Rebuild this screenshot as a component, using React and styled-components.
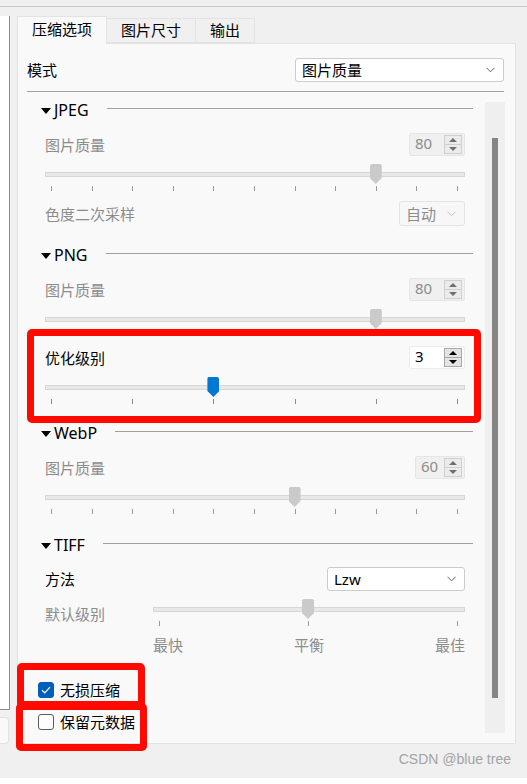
import styled, { createGlobalStyle } from "styled-components";

const font = `"Noto Sans", "Noto Sans CJK SC", sans-serif`;

const GlobalStyle = createGlobalStyle`
  * { box-sizing: border-box; }
  body {
    margin: 0;
    background: #ffffff;
    font-family: ${font};
  }
`;

const Slider = ({ frac, ticks, disabled, active }) => (
  <SliderBox>
    <Groove />
    <TickRow>
      {Array.from({ length: ticks }).map((_, i) => (
        <Tick key={i} $disabled={disabled} />
      ))}
    </TickRow>
    <Handle $active={active} style={{ left: `calc(${frac} * (100% - 14px))` }} />
  </SliderBox>
);

const SpinBox = ({ value, disabled, width }) => (
  <Spin $disabled={disabled} $w={width}>
    <SpinText $disabled={disabled}>{value}</SpinText>
    <SpinButtons>
      <SpinBtn $disabled={disabled}>
        <Arrow $up $disabled={disabled} />
      </SpinBtn>
      <SpinBtn $disabled={disabled}>
        <Arrow $disabled={disabled} />
      </SpinBtn>
    </SpinButtons>
  </Spin>
);

const Chevron = ({ color }) => (
  <svg width="9" height="6" viewBox="0 0 9 6">
    <path d="M0.5 0.8 L4.5 4.8 L8.5 0.8" fill="none" stroke={color} strokeWidth="1" />
  </svg>
);

const Combo = ({ text, width, disabled }) => (
  <ComboBox $w={width} $disabled={disabled}>
    <span>{text}</span>
    <Chevron color={disabled ? "#c4c4c4" : "#606060"} />
  </ComboBox>
);

const Group = ({ title, mt }) => (
  <GroupHeader $mt={mt}>
    <Triangle />
    <GroupTitle>{title}</GroupTitle>
    <GroupLine />
  </GroupHeader>
);

const App = () => {
  return (
    <Page>
      <GlobalStyle />
      <TopBar />
      <Main>
        <LeftColumn>
          <LeftPanel />
          <LeftStub />
        </LeftColumn>
        <TabWidget>
          <TabBar>
            <Tab $selected>压缩选项</Tab>
            <Tab>图片尺寸</Tab>
            <Tab>输出</Tab>
          </TabBar>
          <Pane>
            <ModeRow>
              <Label>模式</Label>
              <Combo text="图片质量" width={209} />
            </ModeRow>
            <Separator />
            <ScrollArea>
              <Content>
                <Group title="JPEG" mt={0} />
                <FieldRow $mt={15}>
                  <Label $disabled>图片质量</Label>
                  <SpinBox value="80" disabled width={56} />
                </FieldRow>
                <SliderWrap $mt={6}>
                  <Slider frac={0.8} ticks={11} disabled />
                </SliderWrap>
                <FieldRow $mt={9}>
                  <Label $disabled>色度二次采样</Label>
                  <Combo text="自动" width={66} disabled />
                </FieldRow>

                <Group title="PNG" mt={21} />
                <FieldRow $mt={15}>
                  <Label $disabled>图片质量</Label>
                  <SpinBox value="80" disabled width={56} />
                </FieldRow>
                <SliderWrap $mt={6}>
                  <Slider frac={0.8} ticks={11} disabled />
                </SliderWrap>
                <FieldRow $mt={9}>
                  <Label>优化级别</Label>
                  <SpinBox value="3" width={56} />
                </FieldRow>
                <SliderWrap $mt={6}>
                  <Slider frac={0.4} ticks={6} active />
                </SliderWrap>

                <Group title="WebP" mt={20} />
                <FieldRow $mt={15}>
                  <Label $disabled>图片质量</Label>
                  <SpinBox value="60" disabled width={50} />
                </FieldRow>
                <SliderWrap $mt={6}>
                  <Slider frac={0.6} ticks={11} disabled />
                </SliderWrap>

                <Group title="TIFF" mt={22} />
                <FieldRow $mt={14}>
                  <Label>方法</Label>
                  <Combo text="Lzw" width={138} />
                </FieldRow>
                <LevelRow $mt={6}>
                  <LevelLabel $disabled>默认级别</LevelLabel>
                  <LevelSlider>
                    <Slider frac={0.5} ticks={3} disabled />
                  </LevelSlider>
                </LevelRow>
                <ScaleLabels>
                  <ScaleText>最快</ScaleText>
                  <ScaleText>平衡</ScaleText>
                  <ScaleText>最佳</ScaleText>
                </ScaleLabels>

                <CheckRow $mt={26}>
                  <CheckBox $checked>
                    <svg width="10" height="8" viewBox="0 0 10 8">
                      <path d="M1 4.2 L3.8 6.8 L9 1.2" fill="none" stroke="#fff" strokeWidth="1.2" />
                    </svg>
                  </CheckBox>
                  <CheckLabel>无损压缩</CheckLabel>
                </CheckRow>
                <CheckRow $mt={11}>
                  <CheckBox />
                  <CheckLabel>保留元数据</CheckLabel>
                </CheckRow>
              </Content>
              <ScrollTrack>
                <ScrollThumb />
              </ScrollTrack>
            </ScrollArea>
          </Pane>
        </TabWidget>
      </Main>
      <Footer>
        <Watermark>CSDN @blue tree</Watermark>
      </Footer>
      <BottomStrip />

      <Highlight $x={27} $y={329} $w={454} $h={94} />
      <Highlight $x={17} $y={663} $w={128} $h={45} />
      <Highlight $x={16} $y={703} $w={131} $h={48} />
    </Page>
  );
};

export default App;

const Page = styled.div`
  position: relative;
  width: 100%;
  height: 784px;
  background: #f0f0f0;
  display: flex;
  flex-direction: column;
  overflow: hidden;
`;

const TopBar = styled.div`
  height: 7px;
  border-bottom: 1px solid #c9c9c9;
`;

const Main = styled.div`
  display: flex;
  margin-top: 9px;
`;

const LeftColumn = styled.div`
  width: 10px;
  display: flex;
  flex-direction: column;
`;

const LeftPanel = styled.div`
  height: 694px;
  background: #ffffff;
  border-right: 1px solid #8e8e8e;
  border-bottom: 1px solid #8e8e8e;
`;

const LeftStub = styled.div`
  margin-top: 7px;
  width: 9px;
  height: 27px;
  background: #f9f9f9;
  border: 1px solid #e2e2e2;
  border-left: none;
  border-radius: 0 4px 4px 0;
`;

const TabWidget = styled.div`
  margin-left: 7px;
  width: 499px;
  display: flex;
  flex-direction: column;
`;

const TabBar = styled.div`
  display: flex;
  align-items: flex-end;
  height: 27px;
`;

const Tab = styled.div`
  position: relative;
  z-index: ${(p) => (p.$selected ? 2 : 1)};
  height: ${(p) => (p.$selected ? 28 : 25)}px;
  margin-bottom: ${(p) => (p.$selected ? -1 : 0)}px;
  padding: 0 14px;
  display: flex;
  align-items: center;
  justify-content: center;
  font-size: 15px;
  line-height: 18px;
  color: #000;
  background: ${(p) => (p.$selected ? "#f9f9f9" : "#f0f0f0")};
  border: 1px solid #e3e3e3;
  border-bottom: ${(p) => (p.$selected ? "none" : "1px solid #e3e3e3")};
  border-left: ${(p) => (p.$selected ? "1px solid #e3e3e3" : "none")};
  padding-bottom: ${(p) => (p.$selected ? 3 : 1)}px;
`;

const Pane = styled.div`
  height: 701px;
  background: #f9f9f9;
  border: 1px solid #e3e3e3;
  padding: 14px 10px 0 9px;
  display: flex;
  flex-direction: column;
`;

const ModeRow = styled.div`
  display: flex;
  align-items: center;
  justify-content: space-between;
  height: 24px;
  padding-right: 1px;
`;

const Label = styled.span`
  font-size: 15px;
  line-height: 18px;
  color: ${(p) => (p.$disabled ? "#8c8c8c" : "#000000")};
`;

const ComboBox = styled.div`
  width: ${(p) => p.$w}px;
  height: ${(p) => (p.$disabled ? 25 : 24)}px;
  display: flex;
  align-items: center;
  justify-content: space-between;
  padding: 0 8px 0 6px;
  font-size: 15px;
  line-height: 18px;
  color: ${(p) => (p.$disabled ? "#8c8c8c" : "#000")};
  background: ${(p) => (p.$disabled ? "#f7f7f7" : "#ffffff")};
  border: 1px solid ${(p) => (p.$disabled ? "#e4e4e4" : "#cccccc")};
  border-radius: 3px;
`;

const Separator = styled.div`
  margin-top: 9px;
  height: 1px;
  background: #a0a0a0;
  margin-right: 1px;
`;

const ScrollArea = styled.div`
  margin-top: 10px;
  height: 631px;
  display: flex;
`;

const Content = styled.div`
  flex: 1;
  display: flex;
  flex-direction: column;
`;

const ScrollTrack = styled.div`
  width: 20px;
  background: #efefef;
  display: flex;
  justify-content: center;
  padding: 36px 0 35px;
`;

const ScrollThumb = styled.div`
  width: 6px;
  background: #858585;
`;

const GroupHeader = styled.div`
  margin-top: ${(p) => p.$mt}px;
  height: 16px;
  display: flex;
  align-items: center;
  padding: 0 12px 0 14px;
`;

const Triangle = styled.div`
  width: 0;
  height: 0;
  border-left: 5px solid transparent;
  border-right: 5px solid transparent;
  border-top: 6px solid #000;
  margin-top: 1px;
`;

const GroupTitle = styled.span`
  margin-left: 3px;
  font-size: 16px;
  line-height: 16px;
  color: #000;
`;

const GroupLine = styled.div`
  flex: 1;
  height: 1px;
  margin-left: 18px;
  margin-top: -3px;
  background: #a0a0a0;
`;

const FieldRow = styled.div`
  margin-top: ${(p) => p.$mt}px;
  display: flex;
  align-items: center;
  justify-content: space-between;
  padding: 0 20px 0 18px;
`;

const Spin = styled.div`
  width: ${(p) => p.$w}px;
  height: 23px;
  display: flex;
  align-items: center;
  background: ${(p) => (p.$disabled ? "#f0f0f0" : "#ffffff")};
  border: 1px solid ${(p) => (p.$disabled ? "#e6e6e6" : "#ececec")};
  border-radius: 2px;
`;

const SpinText = styled.span`
  flex: 1;
  padding: 0 0 3px 5px;
  font-size: 15px;
  line-height: 18px;
  color: ${(p) => (p.$disabled ? "#8c8c8c" : "#000")};
`;

const SpinButtons = styled.div`
  width: 18px;
  height: 19px;
  margin-right: 2px;
  display: flex;
  flex-direction: column;
`;

const SpinBtn = styled.div`
  flex: 1;
  display: flex;
  align-items: center;
  justify-content: center;
  background: ${(p) => (p.$disabled ? "#ebebeb" : "#e4e4e4")};
  border: 1px solid ${(p) => (p.$disabled ? "#cfcfcf" : "#a8a8a8")};
  & + & {
    border-top: none;
  }
`;

const Arrow = styled.div`
  width: 0;
  height: 0;
  border-left: 4px solid transparent;
  border-right: 4px solid transparent;
  ${(p) =>
    p.$up
      ? `border-bottom: 4px solid ${p.$disabled ? "#707070" : "#000"};`
      : `border-top: 4px solid ${p.$disabled ? "#707070" : "#000"};`}
`;

const SliderWrap = styled.div`
  margin-top: ${(p) => p.$mt}px;
  padding: 0 20px 0 18px;
`;

const SliderBox = styled.div`
  position: relative;
  height: 30px;
`;

const Groove = styled.div`
  position: absolute;
  top: 10px;
  left: 0;
  right: 0;
  height: 5px;
  background: #e8e8e8;
  border: 1px solid #d6d6d6;
`;

const TickRow = styled.div`
  position: absolute;
  top: 24px;
  left: 6px;
  right: 7px;
  display: flex;
  justify-content: space-between;
`;

const Tick = styled.div`
  width: 1px;
  height: 5px;
  background: ${(p) => (p.$disabled ? "#9a9a96" : "#8a8a8a")};
`;

const Handle = styled.div`
  position: absolute;
  top: 2px;
  width: 12px;
  height: 20px;
  background: ${(p) => (p.$active ? "#0078d4" : "#cacaca")};
  border-radius: 2px 2px 0 0;
  clip-path: polygon(0 0, 100% 0, 100% 70%, 50% 100%, 0 70%);
`;

const LevelRow = styled.div`
  margin-top: ${(p) => p.$mt}px;
  display: flex;
  align-items: center;
  padding: 0 20px 0 18px;
`;

const LevelLabel = styled(Label)`
  width: 108px;
  margin-top: 4px;
`;

const LevelSlider = styled.div`
  flex: 1;
`;

const ScaleLabels = styled.div`
  margin-top: 10px;
  height: 16px;
  display: flex;
  justify-content: space-between;
  padding: 0 20px 0 126px;
`;

const ScaleText = styled.span`
  font-size: 15px;
  line-height: 16px;
  color: #8c8c8c;
`;

const CheckRow = styled.div`
  margin-top: ${(p) => p.$mt}px;
  height: 22px;
  display: flex;
  align-items: center;
  padding-left: 11px;
`;

const CheckBox = styled.div`
  width: 16px;
  height: 16px;
  border-radius: 3px;
  display: flex;
  align-items: center;
  justify-content: center;
  background: ${(p) => (p.$checked ? "#005fb8" : "#fdfdfd")};
  border: 1px solid ${(p) => (p.$checked ? "#005fb8" : "#5c5c5c")};
`;

const CheckLabel = styled.span`
  margin-left: 6px;
  font-size: 15px;
  line-height: 18px;
  color: #000;
`;

const Footer = styled.div`
  height: 34px;
  display: flex;
  align-items: center;
  justify-content: flex-end;
  padding: 0 16px 4px 0;
`;

const Watermark = styled.span`
  font-family: "Liberation Sans", Arial, sans-serif;
  font-size: 14px;
  color: #a3a3a3;
`;

const BottomStrip = styled.div`
  flex: 1;
  background: #ffffff;
`;

const Highlight = styled.div`
  position: absolute;
  left: ${(p) => p.$x}px;
  top: ${(p) => p.$y}px;
  width: ${(p) => p.$w}px;
  height: ${(p) => p.$h}px;
  border: 7px solid #ff0a00;
  border-radius: 5px;
  pointer-events: none;
`;
